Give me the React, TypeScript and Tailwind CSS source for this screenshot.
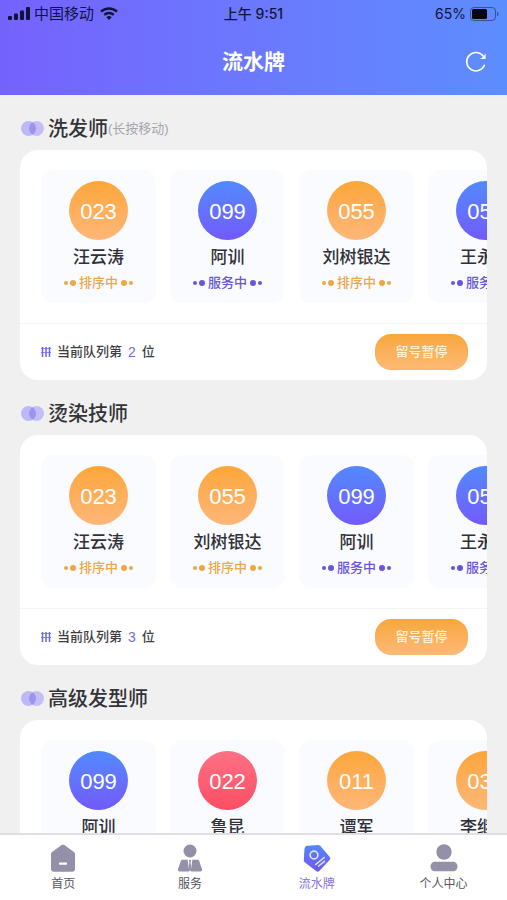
type Tone = "waiting" | "serving" | "away";

interface Person {
  no: string;
  name: string;
  tone: Tone;
}

interface Group {
  title: string;
  note?: string;
  position: number;
  people: Person[];
}

const groups: Group[] = [
  {
    title: "洗发师",
    note: "(长按移动)",
    position: 2,
    people: [
      { no: "023", name: "汪云涛", tone: "waiting" },
      { no: "099", name: "阿训", tone: "serving" },
      { no: "055", name: "刘树银达", tone: "waiting" },
      { no: "056", name: "王永强", tone: "serving" },
    ],
  },
  {
    title: "烫染技师",
    position: 3,
    people: [
      { no: "023", name: "汪云涛", tone: "waiting" },
      { no: "055", name: "刘树银达", tone: "waiting" },
      { no: "099", name: "阿训", tone: "serving" },
      { no: "056", name: "王永强", tone: "serving" },
    ],
  },
  {
    title: "高级发型师",
    position: 2,
    people: [
      { no: "099", name: "阿训", tone: "serving" },
      { no: "022", name: "鲁昆", tone: "away" },
      { no: "011", name: "谭军", tone: "waiting" },
      { no: "033", name: "李继明", tone: "waiting" },
    ],
  },
];

const circleStyle: Record<Tone, string> = {
  waiting: "bg-linear-to-b from-[#fca637] to-[#ffb778]",
  serving: "bg-linear-to-b from-[#5089ff] to-[#7159fb]",
  away: "bg-linear-to-b from-[#ff7085] to-[#fb4d63]",
};

const statusStyle: Record<Tone, string> = {
  waiting: "text-[#eda748]",
  serving: "text-[#6a55d8]",
  away: "text-[#fb4d63]",
};

const statusText: Record<Tone, string> = {
  waiting: "排序中",
  serving: "服务中",
  away: "休息中",
};

function StatusBar() {
  return (
    <div className="grid h-7 grid-cols-3 items-center pr-2 pl-2 font-['Inter','Noto_Sans_CJK_SC',sans-serif] text-sm text-[#11143a]">
      <div className="flex items-center gap-1">
        <svg viewBox="0 0 22 13" className="h-[13px] w-[22px] fill-current" aria-hidden="true">
          <rect x="0" y="9" width="4" height="4" rx="1" />
          <rect x="6" y="6.5" width="4" height="6.5" rx="1" />
          <rect x="12" y="3.5" width="4" height="9.5" rx="1" />
          <rect x="18" y="0" width="4" height="13" rx="1" />
        </svg>
        <span className="text-[15px]">中国移动</span>
        <svg viewBox="0 0 18 13" className="ml-0.5 h-[13px] w-[18px]" fill="none" stroke="currentColor" aria-hidden="true">
          <path d="M1 4.6a11.6 11.6 0 0 1 16 0" strokeWidth="2.5" />
          <path d="M4.2 7.9a7 7 0 0 1 9.6 0" strokeWidth="2.3" />
          <path d="M9 13 6.3 10.2a3.900 3.900 0 0 1 5.400 0Z" fill="currentColor" stroke="none" />
        </svg>
      </div>
      <div className="text-center font-medium">上午 9:51</div>
      <div className="flex items-center justify-end gap-1">
        <span>65%</span>
        <svg viewBox="0 0 29 14" className="h-[14px] w-[29px]" aria-hidden="true">
          <rect x="0.5" y="0.5" width="25" height="13" rx="3.5" fill="none" stroke="#3a4f9e" />
          <rect x="2" y="2" width="15" height="10" rx="1.5" fill="#05060f" />
          <path d="M27 4.500c2 .8 2 4.200 0 5Z" fill="#3a4f9e" />
        </svg>
      </div>
    </div>
  );
}

function RefreshIcon() {
  return (
    <svg viewBox="0 0 22 22" className="size-[22px]" fill="none" stroke="currentColor" strokeWidth="1.6" strokeLinecap="round" aria-hidden="true">
      <path d="M19.4 14.300A9.200 9.200 0 1 1 18.400 5.400" />
      <path d="M20.600 2.200v5.800h-5.800l2.600-1.600 1.600-1.600Z" fill="currentColor" stroke="none" />
    </svg>
  );
}

function OverlapIcon() {
  return (
    <svg viewBox="0 0 23 15" className="h-[15px] w-[23px] shrink-0" aria-hidden="true">
      <circle cx="7.5" cy="7.5" r="7.5" fill="#bdb8f6" />
      <circle cx="15.5" cy="7.5" r="7.5" fill="#c3bef7" />
      <path d="M11.500 1.160a7.500 7.500 0 0 1 0 12.680 7.500 7.500 0 0 1 0-12.680Z" fill="#9c93f0" />
    </svg>
  );
}

function QueueIcon() {
  return (
    <svg viewBox="0 0 10 10" className="size-[10px]" fill="none" aria-hidden="true">
      <path d="M0 1.500h10M0 5.500h10" stroke="#8f93f6" strokeWidth="1.200" />
      <path d="M1.500 0v10M5 0v10M8.500 0v10" stroke="#6b63f2" strokeWidth="1.500" />
    </svg>
  );
}

function Dots({ flip = false }: { flip?: boolean }) {
  return (
    <span className={flip ? "flex flex-row-reverse items-center gap-0.5" : "flex items-center gap-0.5"}>
      <span className="size-1 rounded-full bg-current" />
      <span className="size-1.5 rounded-full bg-current" />
    </span>
  );
}

function PersonTile({ person }: { person: Person }) {
  return (
    <li className="flex h-[133px] w-[115px] shrink-0 flex-col items-center rounded-xl bg-[#f9fbff] pt-[11px]">
      <div className={`flex size-[59px] items-center justify-center rounded-full pt-px text-[22px] text-white ${circleStyle[person.tone]}`}>
        {person.no}
      </div>
      <div className="mt-1.5 text-[17px] leading-6 font-medium text-[#303036]">{person.name}</div>
      <div className={`mt-[3px] flex items-center gap-[3px] text-[13px] leading-5 font-medium ${statusStyle[person.tone]}`}>
        <Dots />
        {statusText[person.tone]}
        <Dots flip />
      </div>
    </li>
  );
}

function GroupSection({ group }: { group: Group }) {
  return (
    <section className="px-5">
      <div className="flex h-[55px] items-center gap-1 pt-3 pl-px">
        <OverlapIcon />
        <div className="flex items-center">
          <h2 className="text-xl leading-7 font-medium text-[#333338]">{group.title}</h2>
          {group.note && <span className="text-[13px] text-[#a5a5ac]">{group.note}</span>}
        </div>
      </div>
      <div className="overflow-hidden rounded-[18px] bg-white">
        <ul className="flex gap-[14px] overflow-x-auto py-5 pl-[21px] [scrollbar-width:none]">
          {group.people.map((person) => (
            <PersonTile key={person.name} person={person} />
          ))}
        </ul>
        <div className="flex h-[57px] items-center justify-between border-t border-[#f4f4f6] pr-[19px] pl-[21px]">
          <p className="flex items-center gap-1.5 text-[13px] font-medium text-[#3c3c42]">
            <QueueIcon />
            <span>当前队列第</span>
            <span className="text-sm font-normal text-[#7468dc]">{group.position}</span>
            <span>位</span>
          </p>
          <button type="button" className="h-9 w-[93px] rounded-[16px] bg-linear-to-b from-[#f9a738] to-[#fdb975] text-[13px] font-medium text-[#fff3dc]">
            留号暂停
          </button>
        </div>
      </div>
    </section>
  );
}

function HomeIcon() {
  return (
    <svg viewBox="0 0 28 28" className="size-7" aria-hidden="true">
      <path d="M12.6 1.1a2.2 2.2 0 0 1 2.8 0l9.2 6.6c1 .8 1.4 1.4 1.4 2.6v14.4a3 3 0 0 1-3 3H5a3 3 0 0 1-3-3V10.300c0-1.200.400-1.800 1.400-2.600Z" fill="#9390a8" />
      <rect x="10" y="18.500" width="8" height="2.200" rx="0.600" fill="#fff" />
    </svg>
  );
}

function ServiceIcon() {
  return (
    <svg viewBox="0 0 28 28" className="size-7 fill-[#9390a8]" aria-hidden="true">
      <circle cx="14" cy="7" r="6.5" />
      <path d="M6.500 15.700h5.100l1.600 11.800H4c-1.800 0-2.500-1.200-1.900-2.700l2.700-7.700c.3-.9.900-1.400 1.700-1.400ZM21.500 15.700h-5.100l-1.600 11.800H24c1.800 0 2.500-1.200 1.900-2.700l-2.700-7.700c-.3-.9-.9-1.400-1.700-1.400Z" />
      <path d="M12.900 16h2.200l-.5 2.300.9 7.300-1.500 1.700-1.500-1.700.9-7.300Z" />
    </svg>
  );
}

function BoardIcon() {
  return (
    <svg viewBox="0 0 28 28" className="size-7" aria-hidden="true">
      <defs>
        <linearGradient id="board" x1="0" y1="0" x2="0" y2="1">
          <stop offset="0" stopColor="#5388f8" />
          <stop offset="1" stopColor="#7455ef" />
        </linearGradient>
      </defs>
      <path d="M4.600 1.700 15 1c.9 0 1.600.2 2.200.8l9.500 11.300c.9 1.100.9 2-.1 3L16.200 26.900c-1 1-2 1-3.100.1L1.700 18.200C1 17.600.8 17 .8 16.200L1.400 5.800c.1-2.500 1-3.900 3.200-4.100Z" fill="url(#board)" />
      <g fill="none" stroke="#dfe4ff" strokeWidth="1.600" strokeLinecap="round">
        <circle cx="11" cy="11" r="3.900" />
        <path d="m12.700 20.500 8.500-7M15.700 22l5.800-4.700" />
      </g>
    </svg>
  );
}

function ProfileIcon() {
  return (
    <svg viewBox="0 0 28 28" className="size-7 fill-[#9390a8]" aria-hidden="true">
      <circle cx="14" cy="8" r="7.700" />
      <rect x="0.500" y="17.700" width="27" height="9.600" rx="4.600" />
    </svg>
  );
}

const tabs = [
  { label: "首页", icon: HomeIcon, active: false },
  { label: "服务", icon: ServiceIcon, active: false },
  { label: "流水牌", icon: BoardIcon, active: true },
  { label: "个人中心", icon: ProfileIcon, active: false },
];

export default function App() {
  return (
    <div className="flex h-screen flex-col bg-[#f0f0f1] font-['Liberation_Sans','Noto_Sans_CJK_SC',sans-serif]">
      <header className="shrink-0 bg-linear-to-r from-[#7562fd] to-[#5c8dfe]">
        <StatusBar />
        <div className="grid h-[67px] grid-cols-[1fr_auto_1fr] items-center px-5">
          <h1 className="col-start-2 text-[21px] font-bold text-white">流水牌</h1>
          <button type="button" aria-label="刷新" className="justify-self-end text-white">
            <RefreshIcon />
          </button>
        </div>
      </header>
      <main className="min-h-0 flex-1 overflow-y-auto [scrollbar-width:none]">
        {groups.map((group) => (
          <GroupSection key={group.title} group={group} />
        ))}
      </main>
      <nav className="grid h-[67px] shrink-0 grid-cols-4 border-t-2 border-[#e0e0e4] bg-white">
        {tabs.map(({ label, icon: Icon, active }) => (
          <a
            key={label}
            href="#"
            aria-current={active ? "page" : undefined}
            className={`flex flex-col items-center gap-0.5 pt-[9px] text-xs leading-5 ${active ? "text-[#8672dc]" : "text-[#55555c]"}`}
          >
            <Icon />
            {label}
          </a>
        ))}
      </nav>
    </div>
  );
}
